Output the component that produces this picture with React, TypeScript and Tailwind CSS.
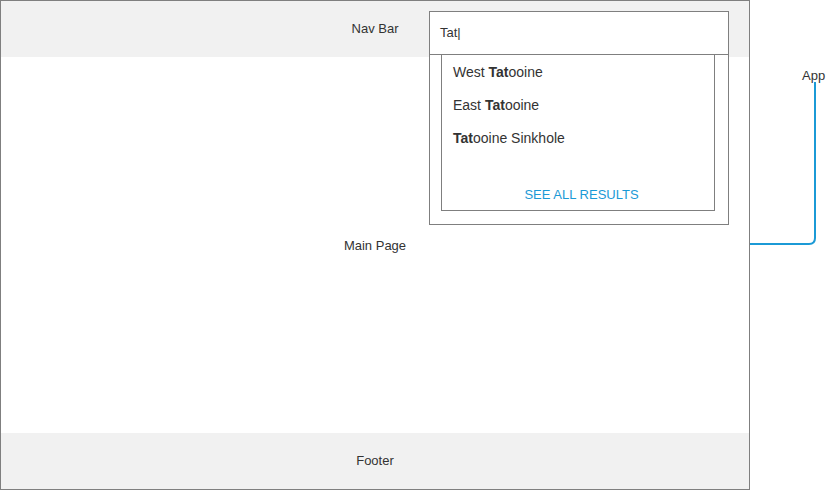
const results = [
  { before: "West ", match: "Tat", after: "ooine" },
  { before: "East ", match: "Tat", after: "ooine" },
  { before: "", match: "Tat", after: "ooine Sinkhole" },
];

export default function App() {
  return (
    <div
      className="relative w-[828px] h-[490px] bg-white text-[13px] text-[#333333]"
      style={{ fontFamily: '"Liberation Sans", Arial, sans-serif' }}
    >
      {/* App frame */}
      <div className="flex flex-col w-[750px] h-[490px] border border-[#7f7f7f]">
        <div className="h-[56px] bg-[#f1f1f1] flex items-center justify-center">Nav Bar</div>
        <div className="flex-1 flex items-center justify-center pt-[2px]">Main Page</div>
        <div className="h-[56px] bg-[#f1f1f1] flex items-center justify-center">Footer</div>
      </div>

      {/* Search with dropdown */}
      <div className="absolute left-[429px] top-[11px] w-[300px] h-[214px] border border-[#7f7f7f] bg-white">
        <div className="h-[43px] border-b border-[#7f7f7f] flex items-center pl-[10px]">Tat|</div>
        <div className="ml-[11px] w-[274px] h-[156px] border-x border-b border-[#7f7f7f] flex flex-col pt-[1px]">
          {results.map((r, i) => (
            <div key={i} className="h-[33px] flex items-center pl-[11px] text-[14px]">
              <span className="whitespace-pre">
                {r.before}
                <b className="font-bold">{r.match}</b>
                {r.after}
              </span>
            </div>
          ))}
          <div className="mt-auto h-[32px] pt-[2px] pl-[7px] flex items-center justify-center text-[#1b9ad6]">
            SEE ALL RESULTS
          </div>
        </div>
      </div>

      {/* Annotation */}
      <div className="absolute left-[802px] top-[66px]">App</div>
      <svg className="absolute left-0 top-0" width="828" height="490" fill="none">
        <path d="M815 82 V238 Q815 244 809 244 H750" stroke="#1b9ad6" strokeWidth="2" />
      </svg>
    </div>
  );
}
